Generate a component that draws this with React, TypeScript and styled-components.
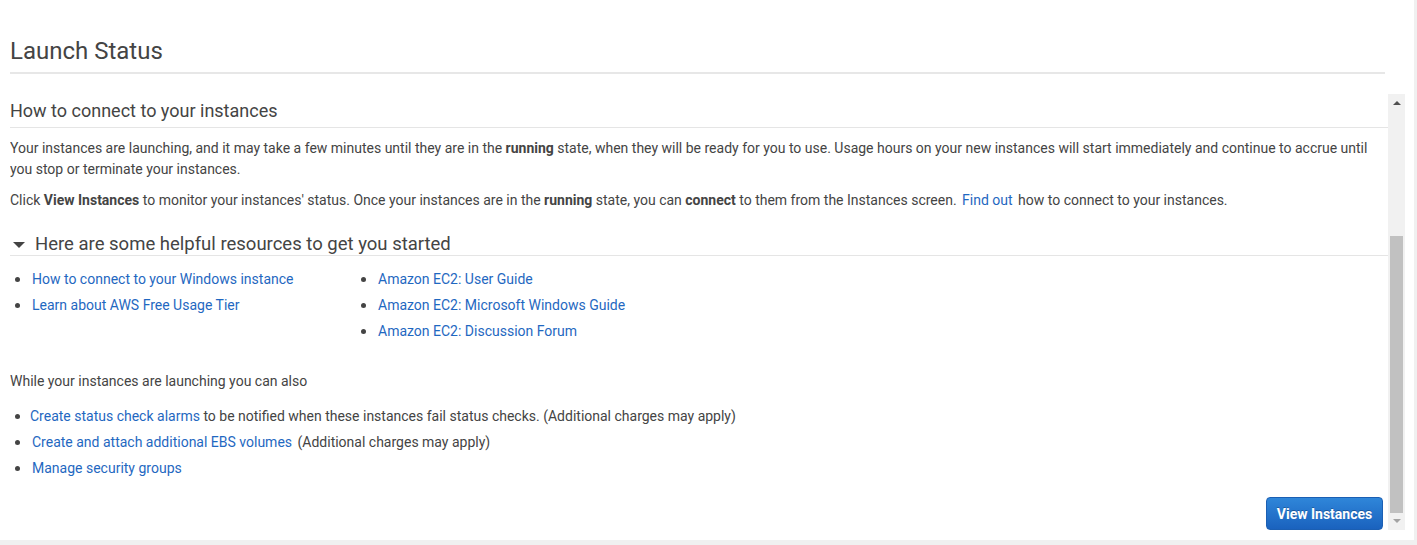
import React from "react";
import styled, { createGlobalStyle } from "styled-components";

const GlobalStyle = createGlobalStyle`
  html, body { margin: 0; padding: 0; }
  body {
    background: #f0f0f0;
    font-family: Roboto, "Liberation Sans", Arial, sans-serif;
    color: #444;
  }
`;

const Frame = styled.div`
  width: 1414px;
  height: 540px;
  background: #fff;
  display: flex;
  flex-direction: column;
  overflow: hidden;
`;

const Header = styled.div`
  padding: 36px 29px 0 10px;
`;

const Title = styled.h1`
  margin: 0;
  font-size: 24px;
  font-weight: 400;
  line-height: 30px;
  color: #444;
  padding-bottom: 6px;
  border-bottom: 2px solid #e7e7e7;
`;

const Body = styled.div`
  margin-top: 20px;
  height: 436px;
  display: flex;
  padding: 0 9px 0 10px;
`;

const Content = styled.div`
  flex: 1;
  min-width: 0;
  overflow: hidden;
  display: flex;
  flex-direction: column;
`;

const SubHeading = styled.h2`
  margin: 5px 0 0;
  font-size: 18px;
  font-weight: 400;
  line-height: 24px;
  color: #444;
  padding-bottom: 4px;
  border-bottom: 1px solid #e5e5e5;
`;

const Para = styled.p<{ $top?: number }>`
  margin: ${(p) => p.$top ?? 10}px 0 0;
  font-size: 14px;
  line-height: 21px;
  color: #444;
  padding-right: 18px;
`;

const Link = styled.a<{ $gap?: number; $lead?: number }>`
  color: #1f68c1;
  text-decoration: none;
  margin-left: ${(p) => p.$lead ?? 0}px;
  margin-right: ${(p) => p.$gap ?? 0}px;
  cursor: pointer;
`;

const ToggleHeading = styled.h3`
  margin: 23px 0 0;
  font-size: 18.5px;
  font-weight: 400;
  line-height: 21px;
  color: #444;
  display: flex;
  align-items: center;
  gap: 10px;
  padding-left: 3px;
  border-bottom: 1px solid #e5e5e5;
`;

const Caret = styled.span`
  width: 0;
  height: 0;
  border-left: 6px solid transparent;
  border-right: 6px solid transparent;
  border-top: 6px solid #444;
  margin-top: 1px;
`;

const Columns = styled.div`
  display: grid;
  grid-template-columns: 346px 1fr;
  margin-top: 10px;
`;

const List = styled.ul<{ $top?: number }>`
  list-style: none;
  margin: ${(p) => p.$top ?? 0}px 0 0;
  padding: 0;
`;

const Item = styled.li<{ $indent?: number }>`
  font-size: 14px;
  line-height: 26px;
  color: #444;
  display: flex;
  align-items: center;
  &::before {
    content: "";
    width: 5px;
    height: 5px;
    border-radius: 50%;
    background: #444;
    margin-left: 5px;
    margin-right: ${(p) => p.$indent ?? 12}px;
    flex-shrink: 0;
  }
`;

const Footer = styled.div`
  display: flex;
  justify-content: flex-end;
  padding-right: 5px;
  margin-top: 16px;
`;

const PrimaryButton = styled.button`
  height: 33px;
  width: 117px;
  border: 1px solid #1b5fb3;
  border-radius: 4px;
  background: linear-gradient(#2f86d9, #1a62be);
  color: #fff;
  font-family: Roboto, "Liberation Sans", Arial, sans-serif;
  font-weight: 700;
  font-size: 14px;
  text-shadow: 0 -1px 0 rgba(0, 0, 0, 0.25);
  cursor: pointer;
  padding: 0;
`;

const Scrollbar = styled.div`
  width: 17px;
  flex-shrink: 0;
  background: #f1f1f1;
  display: flex;
  flex-direction: column;
`;

const ArrowBox = styled.div`
  height: 17px;
  display: flex;
  align-items: center;
  justify-content: center;
`;

const Track = styled.div`
  flex: 1;
  display: flex;
  flex-direction: column;
  justify-content: flex-end;
  padding: 0 2px;
`;

const Thumb = styled.div`
  height: 277px;
  background: #c1c1c1;
`;

const Arrow = ({ up, color }: { up?: boolean; color: string }) => (
  <svg width="8" height="5" viewBox="0 0 8 5">
    {up ? (
      <polygon points="0,5 4,1 8,5" fill={color} />
    ) : (
      <polygon points="0,0 4,4 8,0" fill={color} />
    )}
  </svg>
);

export default function App() {
  return (
    <>
      <GlobalStyle />
      <Frame>
        <Header>
          <Title>Launch Status</Title>
        </Header>
        <Body>
          <Content>
            <SubHeading>How to connect to your instances</SubHeading>
            <Para>
              Your instances are launching, and it may take a few minutes until they are in the{" "}
              <b>running</b> state, when they will be ready for you to use. Usage hours on your new
              instances will start immediately and continue to accrue until you stop or terminate
              your instances.
            </Para>
            <Para>
              Click <b>View Instances</b> to monitor your instances' status. Once your instances are
              in the <b>running</b> state, you can <b>connect</b> to them from the Instances screen.{" "}
              <Link $lead={2} $gap={2}>Find out</Link> how to connect to your instances.
            </Para>
            <ToggleHeading>
              <Caret />
              Here are some helpful resources to get you started
            </ToggleHeading>
            <Columns>
              <List>
                <Item><Link>How to connect to your Windows instance</Link></Item>
                <Item><Link>Learn about AWS Free Usage Tier</Link></Item>
              </List>
              <List>
                <Item><Link>Amazon EC2: User Guide</Link></Item>
                <Item><Link>Amazon EC2: Microsoft Windows Guide</Link></Item>
                <Item><Link>Amazon EC2: Discussion Forum</Link></Item>
              </List>
            </Columns>
            <Para $top={27}>While your instances are launching you can also</Para>
            <List $top={11}>
              <Item $indent={10}>
                <span>
                  <Link>Create status check alarms</Link> to be notified when these instances fail
                  status checks. (Additional charges may apply)
                </span>
              </Item>
              <Item>
                <span>
                  <Link $gap={2}>Create and attach additional EBS volumes</Link> (Additional charges
                  may apply)
                </span>
              </Item>
              <Item><Link>Manage security groups</Link></Item>
            </List>
            <Footer>
              <PrimaryButton>View Instances</PrimaryButton>
            </Footer>
          </Content>
          <Scrollbar>
            <ArrowBox>
              <Arrow up color="#505050" />
            </ArrowBox>
            <Track>
              <Thumb />
            </Track>
            <ArrowBox>
              <Arrow color="#a3a3a3" />
            </ArrowBox>
          </Scrollbar>
        </Body>
      </Frame>
    </>
  );
}
